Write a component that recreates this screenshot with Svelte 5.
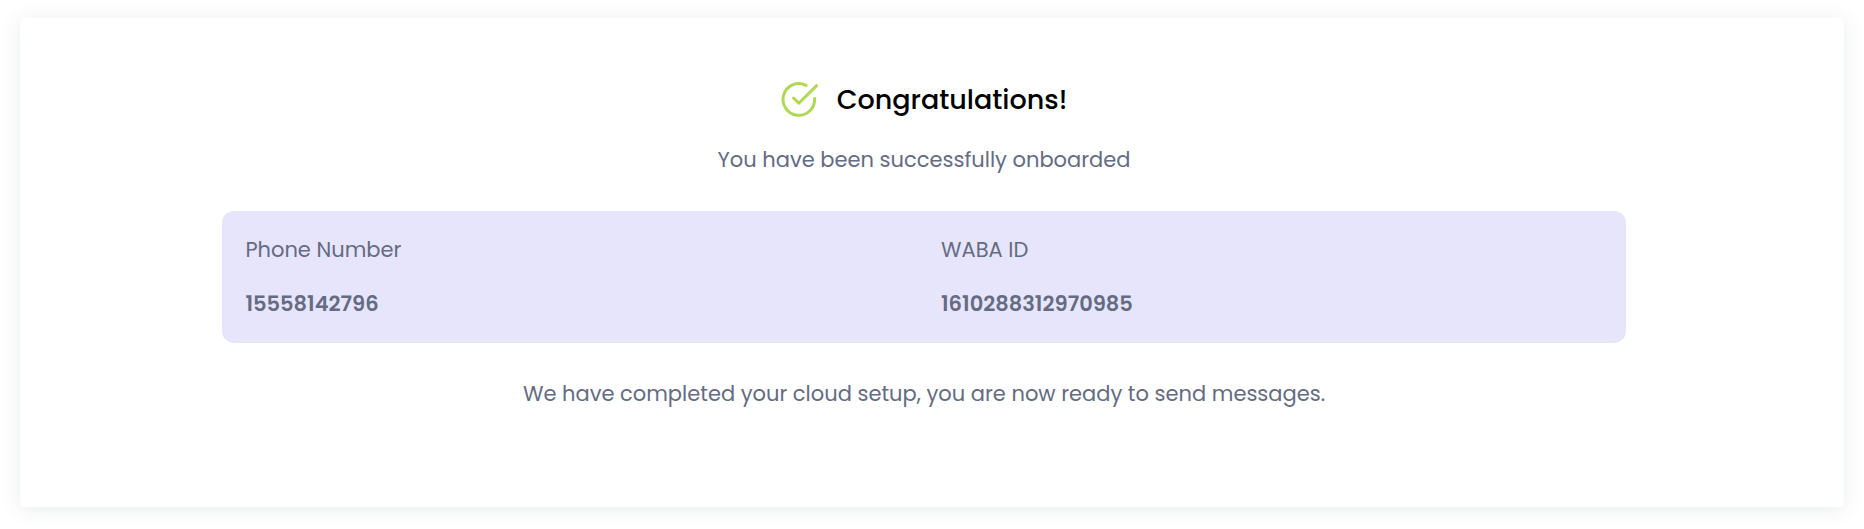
<script>
	const title = 'Congratulations!';

	const details = [
		{ label: 'Phone Number', value: '15558142796' },
		{ label: 'WABA ID', value: '1610288312970985' }
	];
</script>

<main class="card">
	<div class="heading">
		<svg class="check-icon" viewBox="0 0 38 36" fill="none" aria-hidden="true">
			<path d="M25 3.4 A15.8 15.8 0 1 0 33.6 16.6" />
			<path d="M12.6 16 L17.8 21.2 L35.6 3.6" />
		</svg>
		<h1>{title}</h1>
	</div>

	<p class="subtitle">You have been successfully onboarded</p>

	<dl class="details">
		{#each details as item}
			<div class="detail">
				<dt>{item.label}</dt>
				<dd>{item.value}</dd>
			</div>
		{/each}
	</dl>

	<p>We have completed your cloud setup, you are now ready to send messages.</p>
</main>

<style>
	:global(body) {
		background: #fff;
	}

	.card {
		margin: 18px 20px 20px;
		padding: 62px calc(10% + 32px) 97px calc(10% + 16px);
		border-radius: 4px;
		background: #fff;
		box-shadow: 0 2px 20px rgba(40, 70, 60, 0.1);
		color: #646b82;
		font-family: Poppins, Inter, sans-serif;
		font-size: 21px;
		line-height: 32px;
		text-align: center;
	}

	.heading {
		display: flex;
		align-items: center;
		justify-content: center;
		gap: 18px;
		margin-bottom: 24px;
	}

	.check-icon {
		width: 38px;
		height: 36px;
		stroke: #afd855;
		stroke-width: 3;
		stroke-linecap: round;
		stroke-linejoin: round;
	}

	h1 {
		margin: 0;
		color: #000;
		font-size: 27px;
		font-weight: 500;
		line-height: 40px;
	}

	p {
		margin: 0;
	}

	.subtitle {
		margin-bottom: 35px;
	}

	.details {
		display: grid;
		grid-template-columns: 1fr 1fr;
		gap: 34px;
		margin: 0 0 35px;
		padding: 23px;
		border-radius: 12px;
		background: #e7e5fc;
		text-align: left;
	}

	dt {
		margin-bottom: 22px;
	}

	dd {
		margin: 0;
		font-weight: 600;
	}
</style>
